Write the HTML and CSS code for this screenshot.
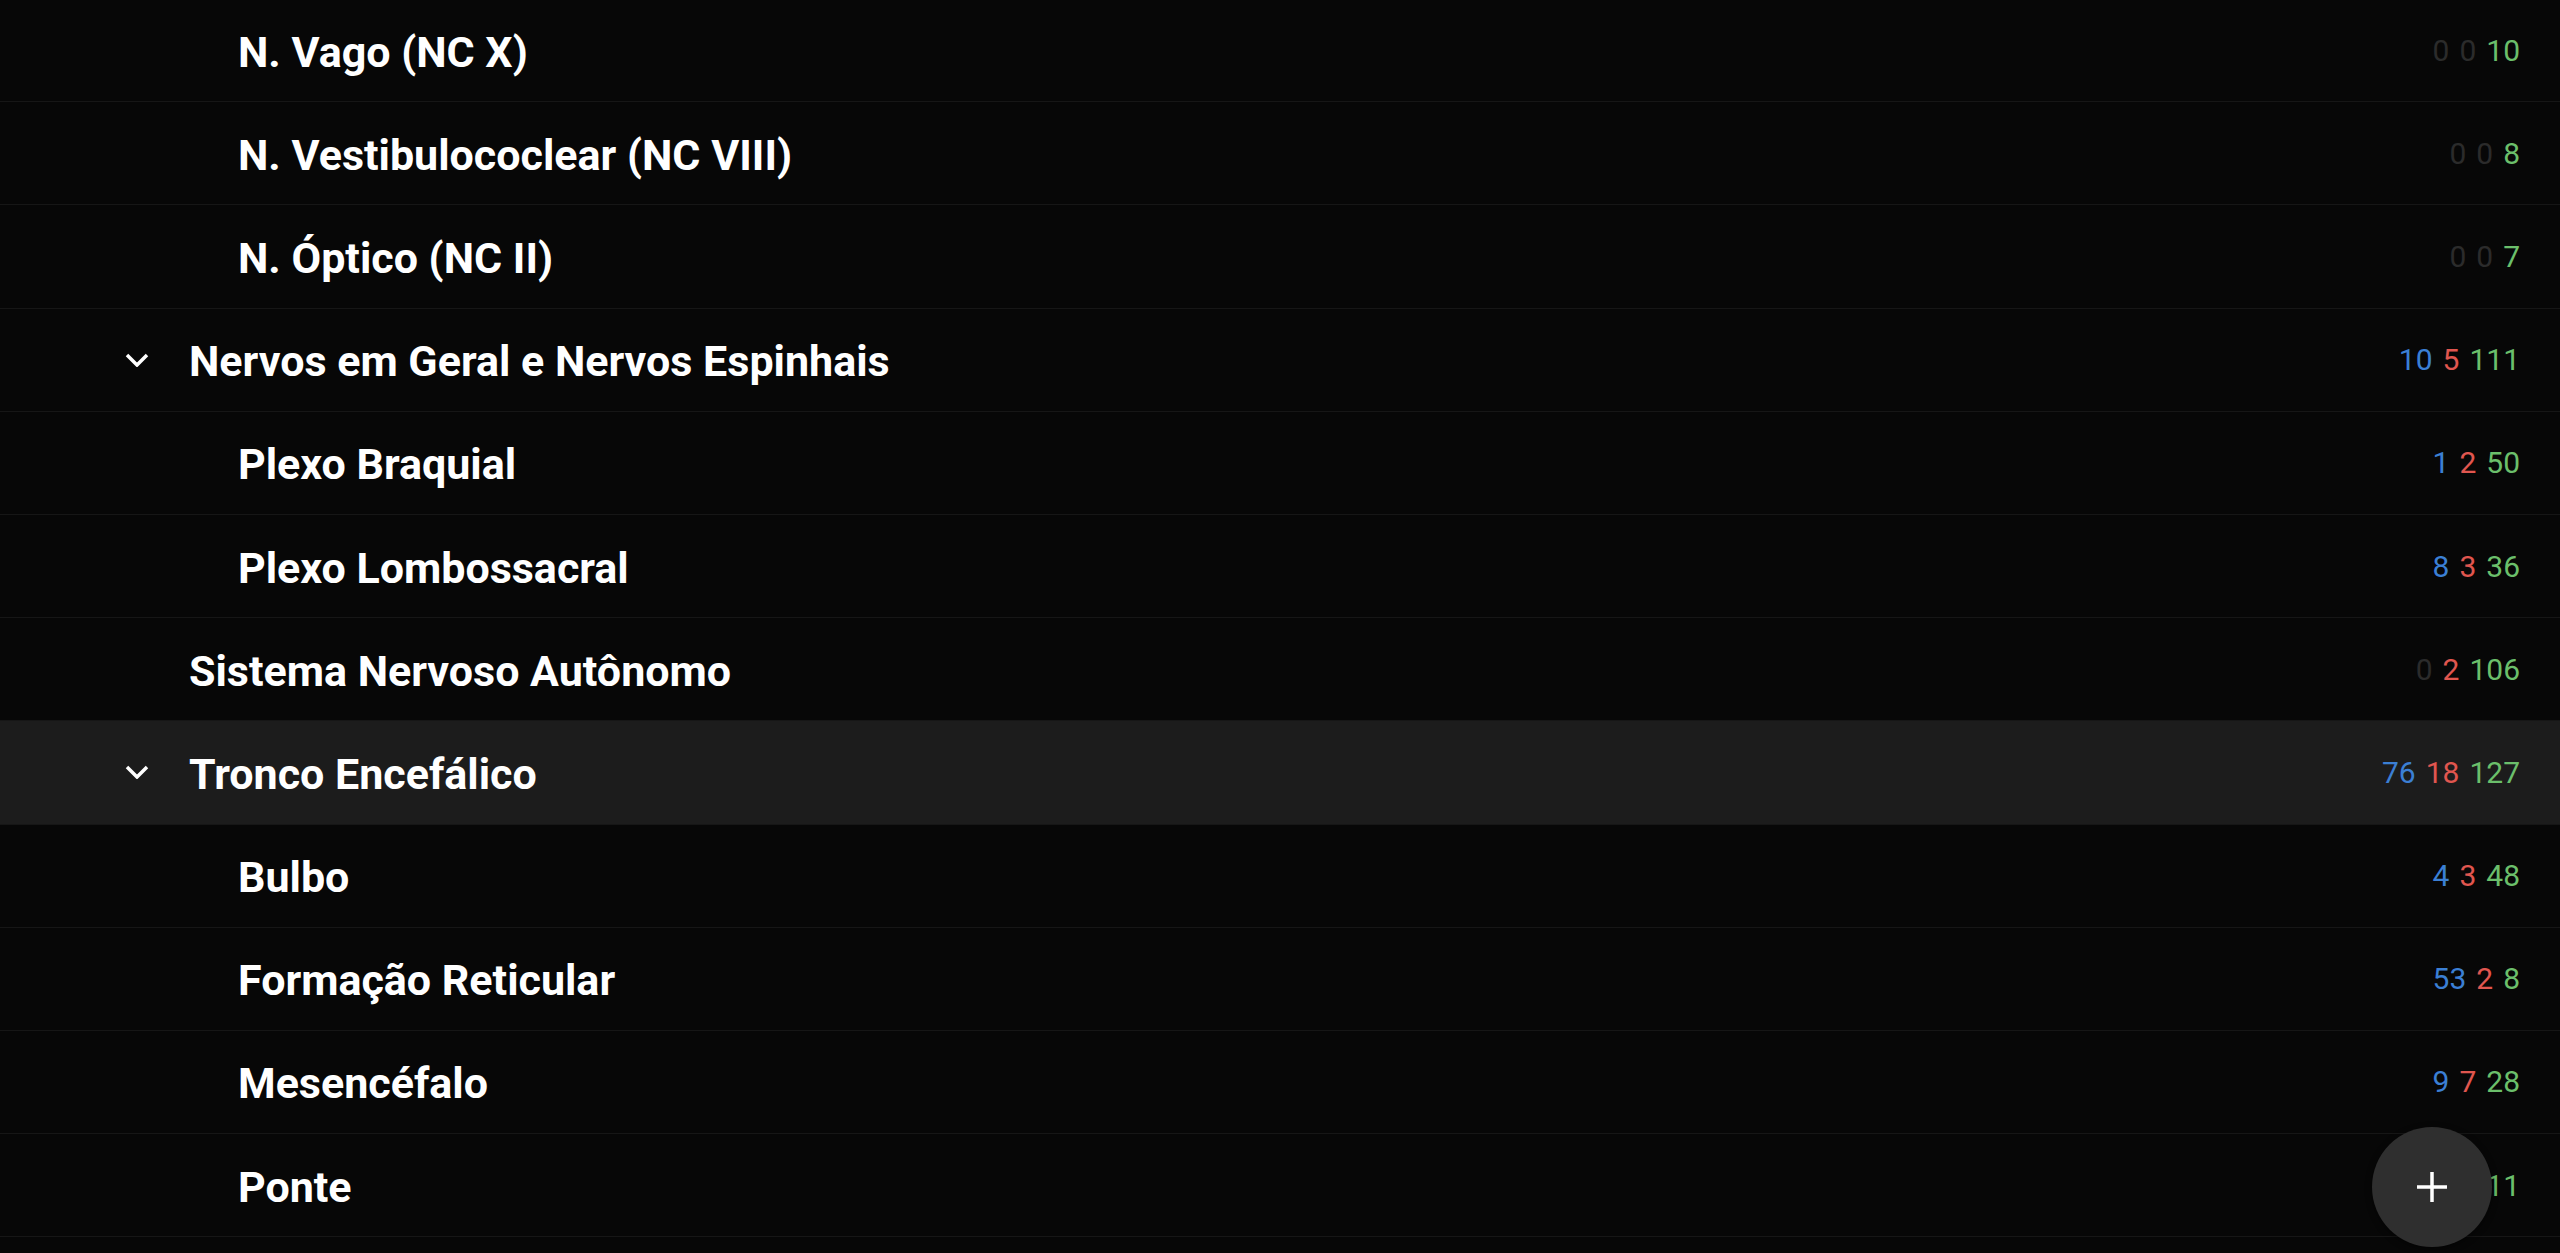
FILE: index.html
```html
<!DOCTYPE html>
<html lang="pt">
<head>
  <meta charset="UTF-8">
  <title>Baralhos</title>
  <link rel="stylesheet" href="styles.css">
</head>
<body>
  <div class="deck-list">
    <div class="row depth-1">
      <span class="twisty"></span>
      <span class="name">N. Vago (NC X)</span>
      <span class="counts"><span class="zero">0</span><span class="zero">0</span><span class="total">10</span></span>
    </div>
    <div class="row depth-1">
      <span class="twisty"></span>
      <span class="name">N. Vestibulococlear (NC VIII)</span>
      <span class="counts"><span class="zero">0</span><span class="zero">0</span><span class="total">8</span></span>
    </div>
    <div class="row depth-1">
      <span class="twisty"></span>
      <span class="name">N. Óptico (NC II)</span>
      <span class="counts"><span class="zero">0</span><span class="zero">0</span><span class="total">7</span></span>
    </div>
    <div class="row depth-0">
      <span class="twisty"><svg viewBox="0 0 24 14" width="24" height="14"><path d="M2 2l10 10 10-10" /></svg></span>
      <span class="name">Nervos em Geral e Nervos Espinhais</span>
      <span class="counts"><span class="new">10</span><span class="learn">5</span><span class="total">111</span></span>
    </div>
    <div class="row depth-1">
      <span class="twisty"></span>
      <span class="name">Plexo Braquial</span>
      <span class="counts"><span class="new">1</span><span class="learn">2</span><span class="total">50</span></span>
    </div>
    <div class="row depth-1">
      <span class="twisty"></span>
      <span class="name">Plexo Lombossacral</span>
      <span class="counts"><span class="new">8</span><span class="learn">3</span><span class="total">36</span></span>
    </div>
    <div class="row depth-0">
      <span class="twisty"></span>
      <span class="name">Sistema Nervoso Autônomo</span>
      <span class="counts"><span class="zero">0</span><span class="learn">2</span><span class="total">106</span></span>
    </div>
    <div class="row depth-0 current">
      <span class="twisty"><svg viewBox="0 0 24 14" width="24" height="14"><path d="M2 2l10 10 10-10" /></svg></span>
      <span class="name">Tronco Encefálico</span>
      <span class="counts"><span class="new">76</span><span class="learn">18</span><span class="total">127</span></span>
    </div>
    <div class="row depth-1">
      <span class="twisty"></span>
      <span class="name">Bulbo</span>
      <span class="counts"><span class="new">4</span><span class="learn">3</span><span class="total">48</span></span>
    </div>
    <div class="row depth-1">
      <span class="twisty"></span>
      <span class="name">Formação Reticular</span>
      <span class="counts"><span class="new">53</span><span class="learn">2</span><span class="total">8</span></span>
    </div>
    <div class="row depth-1">
      <span class="twisty"></span>
      <span class="name">Mesencéfalo</span>
      <span class="counts"><span class="new">9</span><span class="learn">7</span><span class="total">28</span></span>
    </div>
    <div class="row depth-1">
      <span class="twisty"></span>
      <span class="name">Ponte</span>
      <span class="counts"><span class="new">1</span><span class="learn">1</span><span class="total">11</span></span>
    </div>
  </div>

  <button class="fab" aria-label="Adicionar">
    <svg viewBox="0 0 32 32" width="32" height="32"><path d="M16 1v30M1 16h30" /></svg>
  </button>
</body>
</html>
```

FILE: styles.css
```css
body {
  margin: 0;
  background: #070707;
  color: #fff;
  font-family: Roboto, "Noto Sans", sans-serif;
  overflow: hidden;
}
.deck-list {
  margin-top: -1px;
}
.row {
  display: flex;
  align-items: center;
  height: 102.2px;
  border-bottom: 1px solid #161616;
  padding-right: 40px;
}
.row.depth-0 { padding-left: 113px; }
.row.depth-1 { padding-left: 162px; }
.row.current { background: #1c1c1c; }
.twisty {
  display: flex;
  align-items: center;
  justify-content: center;
  width: 48px;
  margin-right: 28px;
  flex-shrink: 0;
}
.twisty svg {
  fill: none;
  stroke: #fff;
  stroke-width: 3.5;
}
.name {
  flex: 1;
  font-size: 43px;
  font-weight: 700;
  white-space: nowrap;
  padding-top: 3px;
}
.counts {
  display: flex;
  gap: 10px;
  font-size: 30px;
}
.counts .zero { color: #2b2b2b; }
.counts .new { color: #3b7fd4; }
.counts .learn { color: #e0564f; }
.counts .total { color: #6bbf6b; }
.fab {
  position: fixed;
  right: 68px;
  bottom: 6px;
  width: 120px;
  height: 120px;
  border: none;
  border-radius: 50%;
  background: #2f2f2f;
  box-shadow: 0 2px 6px #0008;
  display: flex;
  align-items: center;
  justify-content: center;
  padding: 0;
}
.fab svg {
  stroke: #fff;
  stroke-width: 3.5;
}
```
